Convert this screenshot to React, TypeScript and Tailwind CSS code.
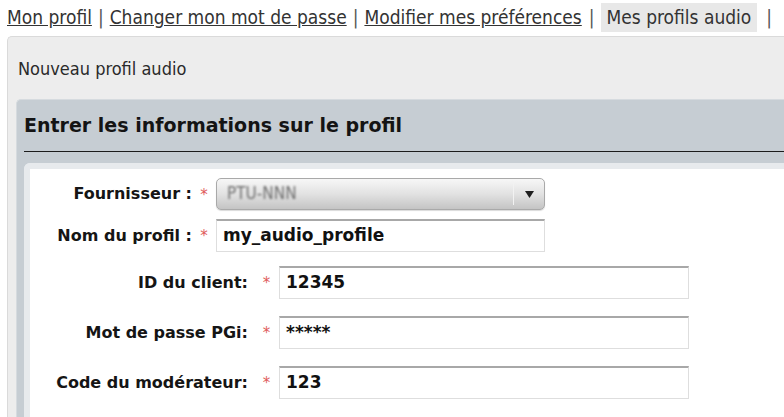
import React from "react";

const reg = "font-['DejaVu_Sans_Condensed','DejaVu_Sans',sans-serif] [font-stretch:condensed]";
const bold = "font-['DejaVu_Sans',sans-serif] font-bold";

function Star() {
  return <span className="font-['DejaVu_Sans',sans-serif] text-[#e05a5a] text-[15px]">*</span>;
}

function Field({ value, width }: { value: string; width: string }) {
  return (
    <div
      className={`${width} h-[33px] bg-white border border-[#dedede] border-t-2 border-t-[#a8a8a8] flex items-center pl-[6px] ${bold} text-[17px] text-[#111]`}
    >
      {value}
    </div>
  );
}

export default function App() {
  return (
    <div className="w-[784px] h-[417px] overflow-hidden bg-white">
      {/* nav */}
      <div className={`${reg} text-[19px] text-[#333] flex items-center h-[36px] pt-[3px] pb-[4px] pl-[7px] whitespace-nowrap`}>
        <span className="underline">Mon profil</span>
        <span className="px-[6px] text-[#555]">|</span>
        <span className="underline">Changer mon mot de passe</span>
        <span className="px-[6px] text-[#555]">|</span>
        <span className="underline">Modifier mes préférences</span>
        <span className="pl-[7px] pr-[6px] text-[#555]">|</span>
        <span className="bg-[#e8e8e8] h-full flex items-center px-[6px]">Mes profils audio</span>
        <span className="pl-[9px] text-[#555]">|</span>
      </div>

      {/* outer panel */}
      <div className="ml-[7px] h-[381px] bg-[#ededed] border-l border-t border-[#dadada] rounded-tl-[5px] flex flex-col">
        <div className={`${reg} text-[18px] text-[#2a2a2a] h-[62px] flex items-center pl-[10px]`}>
          Nouveau profil audio
        </div>

        {/* inner panel */}
        <div className="ml-[8px] flex-1 bg-[#c6cdd3] rounded-tl-[5px] border-l border-t border-[#d6dbdf] pl-[7px] flex flex-col">
          <div className="h-[52px] flex items-center border-b border-[#1c1c1c]">
            <span className={`${bold} text-[19px] text-[#141414]`}>Entrer les informations sur le profil</span>
          </div>
          <div className="mt-[11px] flex-1 bg-white border-l-[6px] border-t-[6px] border-[#e7eaed] rounded-tl-[6px] pt-[9px]">
            {/* rows 1-2 */}
            <div className="flex items-center h-[32px]">
              <div className={`${bold} text-[16px] text-[#151515] w-[162px] text-right`}>Fournisseur :</div>
              <div className="w-[24px] text-center"><Star /></div>
              <div className="w-[329px] h-[32px] rounded-[5px] border border-[#a9a9a9] bg-gradient-to-b from-[#f7f7f7] via-[#e2e2e2] to-[#c4c4c4] shadow-[0_1px_1px_rgba(0,0,0,0.15)] flex items-center">
                <span className={`${reg} flex-1 pl-[10px] text-[17px] text-[#6e6e6e] blur-[1.2px]`}>PTU-NNN</span>
                <div className="w-px h-[22px] bg-[#c9c9c9] border-r border-[#f2f2f2]"></div>
                <div className="w-[30px] flex justify-center">
                  <svg width="9" height="7" viewBox="0 0 9 7"><path d="M0 0 H9 L4.5 7 Z" fill="#1e1e1e" /></svg>
                </div>
              </div>
            </div>
            <div className="flex items-center mt-[9px]">
              <div className={`${bold} text-[16px] text-[#151515] w-[162px] text-right`}>Nom du profil :</div>
              <div className="w-[24px] text-center"><Star /></div>
              <Field value="my_audio_profile" width="w-[329px]" />
            </div>

            {/* rows 3-5 */}
            <div className="flex flex-col gap-[17px] mt-[14px]">
              {[
                ["ID du client:", "12345"],
                ["Mot de passe PGi:", "*****"],
                ["Code du modérateur:", "123"],
              ].map(([l, v]) => (
                <div key={l} className="flex items-center">
                  <div className={`${bold} text-[16px] text-[#151515] w-[218px] text-right`}>{l}</div>
                  <div className="w-[31px] text-center pl-[6px]"><Star /></div>
                  <Field value={v} width="w-[410px]" />
                </div>
              ))}
            </div>
          </div>
        </div>
      </div>
    </div>
  );
}
